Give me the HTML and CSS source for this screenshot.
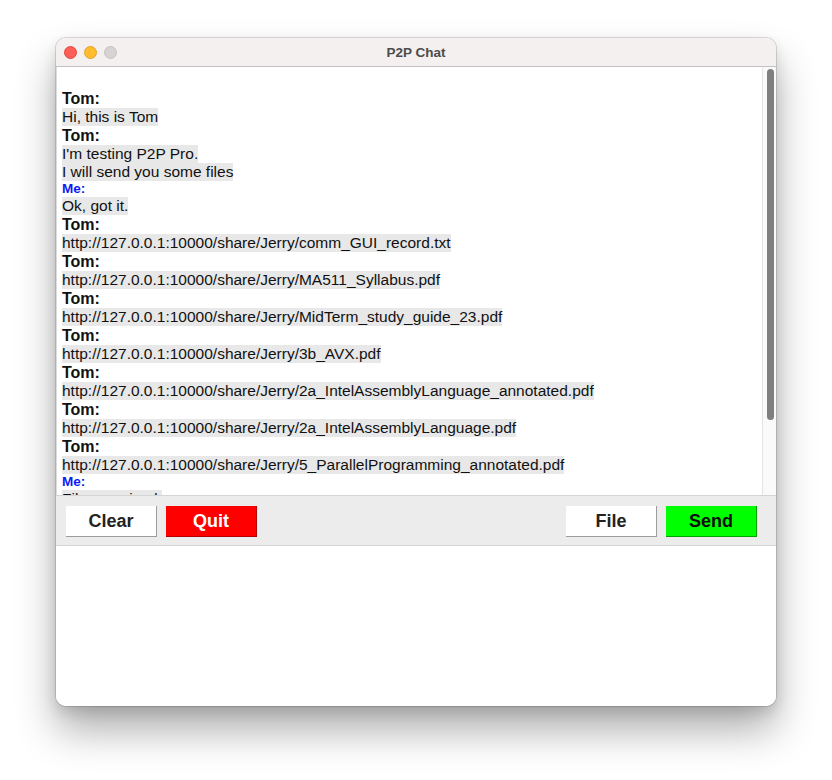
FILE: index.html
```html
<!DOCTYPE html>
<html>
<head>
<meta charset="utf-8">
<title>P2P Chat</title>
<link rel="stylesheet" href="styles.css">
</head>
<body>
<div class="window">
  <div class="titlebar">
    <div class="lights">
      <span class="light red"></span>
      <span class="light yellow"></span>
      <span class="light grey"></span>
    </div>
    <div class="title">P2P Chat</div>
    <div></div>
  </div>
  <div class="chat">
    <div class="log">
      <div class="blank"></div>
      <div class="who">Tom:</div>
      <div class="msg">Hi, this is Tom</div>
      <div class="who">Tom:</div>
      <div class="msg">I'm testing P2P Pro.</div>
      <div class="msg">I will send you some files</div>
      <div class="me">Me:</div>
      <div class="msg">Ok, got it.</div>
      <div class="who">Tom:</div>
      <div class="msg">http://127.0.0.1:10000/share/Jerry/comm_GUI_record.txt</div>
      <div class="who">Tom:</div>
      <div class="msg">http://127.0.0.1:10000/share/Jerry/MA511_Syllabus.pdf</div>
      <div class="who">Tom:</div>
      <div class="msg">http://127.0.0.1:10000/share/Jerry/MidTerm_study_guide_23.pdf</div>
      <div class="who">Tom:</div>
      <div class="msg">http://127.0.0.1:10000/share/Jerry/3b_AVX.pdf</div>
      <div class="who">Tom:</div>
      <div class="msg">http://127.0.0.1:10000/share/Jerry/2a_IntelAssemblyLanguage_annotated.pdf</div>
      <div class="who">Tom:</div>
      <div class="msg">http://127.0.0.1:10000/share/Jerry/2a_IntelAssemblyLanguage.pdf</div>
      <div class="who">Tom:</div>
      <div class="msg">http://127.0.0.1:10000/share/Jerry/5_ParallelProgramming_annotated.pdf</div>
      <div class="me">Me:</div>
      <div class="msg">Files received.</div>
    </div>
    <div class="scrollbar"><div class="thumb"></div></div>
  </div>
  <div class="toolbar">
    <button class="btn">Clear</button>
    <button class="btn quit">Quit</button>
    <div class="spacer"></div>
    <button class="btn">File</button>
    <button class="btn send">Send</button>
  </div>
  <div class="input"></div>
</div>
</body>
</html>
```

FILE: styles.css
```css
html, body {
  margin: 0;
  padding: 0;
  background: #ffffff;
}

body {
  font-family: "Liberation Sans", Arial, Helvetica, sans-serif;
  padding: 38px 0 0 56px;
  min-height: 780px;
  box-sizing: border-box;
}

.window {
  width: 720px;
  height: 668px;
  border-radius: 10px;
  overflow: hidden;
  display: flex;
  flex-direction: column;
  background: #ffffff;
  box-shadow: 0 0 0 1px rgba(0, 0, 0, 0.13), 0 24px 40px rgba(0, 0, 0, 0.32), 0 6px 14px rgba(0, 0, 0, 0.12);
}

.titlebar {
  height: 28px;
  flex: none;
  background: #f3f0ef;
  border-bottom: 1px solid #c4c2c1;
  display: grid;
  grid-template-columns: 1fr auto 1fr;
  align-items: center;
}

.lights {
  display: flex;
  gap: 7px;
  padding-left: 8px;
}

.light {
  width: 13px;
  height: 13px;
  border-radius: 50%;
  box-sizing: border-box;
}

.light.red { background: #fe5f57; border: 1px solid #e2463f; }
.light.yellow { background: #febc2e; border: 1px solid #e0a12a; }
.light.grey { background: #d6d3d2; border: 1px solid #c6c3c2; }

.title {
  font-size: 13.5px;
  font-weight: bold;
  color: #4c4c4c;
}

.chat {
  height: 428px;
  flex: none;
  display: flex;
  border-left: 1px solid #dcdcdc;
}

.log {
  flex: 1;
  overflow: hidden;
  padding: 4px 0 0 5px;
  color: #111111;
}

.blank {
  height: 18px;
}

.who {
  font-size: 16px;
  font-weight: bold;
  line-height: 19px;
  height: 19px;
}

.me {
  font-size: 13.5px;
  font-weight: bold;
  line-height: 16px;
  height: 16px;
  color: #0a1bf5;
}

.msg {
  font-size: 15.5px;
  line-height: 18px;
  height: 18px;
  width: fit-content;
  background: #e8e8e8;
  white-space: nowrap;
}

.scrollbar {
  width: 14px;
  flex: none;
  background: #fafafa;
  border-left: 1px solid #e4e4e4;
  padding: 2px 3px 0 4px;
  box-sizing: border-box;
}

.thumb {
  width: 7px;
  height: 351px;
  border-radius: 4px;
  background: #7f7f7f;
}

.toolbar {
  height: 51px;
  flex: none;
  box-sizing: border-box;
  background: #ececec;
  border-top: 1px solid #d4d4d4;
  border-bottom: 1px solid #d4d4d4;
  display: flex;
  align-items: flex-start;
  gap: 9px;
  padding: 10px 19px 0 10px;
}

.spacer {
  flex: 1;
}

.btn {
  width: 91px;
  height: 31px;
  box-sizing: border-box;
  border: none;
  border-right: 1px solid #9c9c9c;
  border-bottom: 1px solid #9c9c9c;
  background: #ffffff;
  color: #222222;
  font-family: "Liberation Sans", Arial, Helvetica, sans-serif;
  font-size: 18px;
  font-weight: bold;
  padding: 0;
  margin: 0;
}

.btn.quit {
  background: #ff0000;
  color: #ffffff;
  border-color: #b30000;
}

.btn.send {
  background: #00ff00;
  color: #0d0d0d;
  border-color: #00a000;
}

.input {
  flex: 1;
  background: #ffffff;
}
```
